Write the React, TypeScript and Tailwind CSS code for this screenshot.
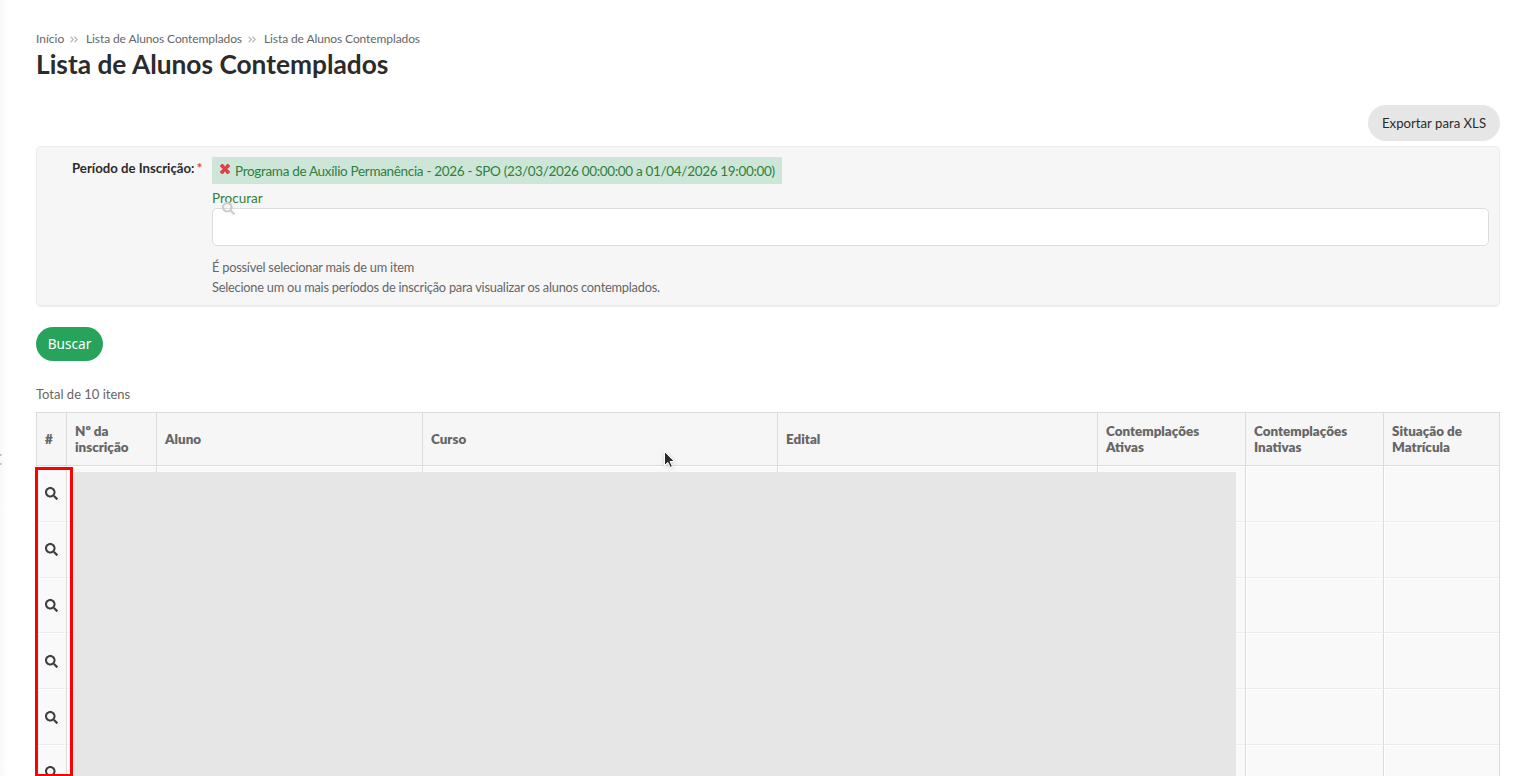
import React, { ReactNode } from "react"
import { FaSearch } from "react-icons/fa"

const COLUMNS = [
  { label: "#", width: "w-[30px]" },
  { label: "Nº da inscrição", width: "w-[90px]" },
  { label: "Aluno", width: "w-[266px]" },
  { label: "Curso", width: "w-[355px]" },
  { label: "Edital", width: "w-[320px]" },
  { label: "Contemplações Ativas", width: "w-[148px]" },
  { label: "Contemplações Inativas", width: "w-[138px]" },
  { label: "Situação de Matrícula", width: "w-[116px]" },
]

const ROWS = [1, 2, 3, 4, 5, 6]

const Separator = () => (
  <svg className="mr-[8px] ml-[6px]" width="8" height="7" viewBox="0 0 8 7">
    <path d="M0.7 0.7L3.3 3.5L0.7 6.3M4.5 0.7L7.1 3.5L4.5 6.3" fill="none" stroke="#bbb" strokeWidth="1.3" />
  </svg>
)

const Breadcrumbs = () => (
  <nav className="flex h-[18px] items-center text-[12px] leading-[18px] whitespace-nowrap text-[#666]">
    <a className="w-7">Início</a>
    <Separator />
    <a className="w-[156px] tracking-[-0.1px]">Lista de Alunos Contemplados</a>
    <Separator />
    <a className="tracking-[-0.1px]">Lista de Alunos Contemplados</a>
  </nav>
)

const RemoveIcon = () => (
  <svg className="mr-[4px] mb-[3px]" width="10" height="10" viewBox="0 0 10 10">
    <path
      d="M0 1.8L1.8 0H3L5 2.6L7 0H8.2L10 1.8V2.6L7.3 5L10 7.4V8.2L8.2 10H7L5 7.4L3 10H1.8L0 8.2V7.4L2.7 5L0 2.6Z"
      fill="#dc4245"
    />
  </svg>
)

const FilterBox = () => (
  <section className="mt-[5px] flex h-[161px] rounded-[5px] border border-b-2 border-[#ececec] bg-[#f6f6f6] pt-[10px] pr-[10px]">
    <label className="w-[175px] shrink-0 pt-px pl-[35px] text-[13.2px] leading-5 font-bold whitespace-nowrap text-[#2b2b2b]">
      Período de Inscrição: <span className="-ml-px text-[#e2453c]">*</span>
    </label>
    <div className="flex-1 text-[13.5px]">
      <div className="flex h-[27px] w-[570px] items-center bg-[#cde6d8] pl-2 whitespace-nowrap text-[#2f803e]">
        <RemoveIcon />
        <span className="pt-[2px] pl-px tracking-[-0.32px]">
          Programa de Auxílio Permanência - 2026 - SPO (23/03/2026 00:00:00 a 01/04/2026 19:00:00)
        </span>
      </div>
      <div className="relative h-6 pt-1 leading-5 text-[#2f803e]">
        Procurar
        <FaSearch className="absolute top-[18px] left-[10px] z-10 size-[13px] text-[#ccc]" />
      </div>
      <div className="h-[38px] rounded-[5px] border border-[#dcdcdc] bg-white" />
      <p className="mt-[11px] text-[12.8px] leading-5 tracking-[-0.22px] text-[#666]">
        É possível selecionar mais de um item
        <br />
        Selecione um ou mais períodos de inscrição para visualizar os alunos contemplados.
      </p>
    </div>
  </section>
)

const TableRow = ({ children }: { children: ReactNode }) => (
  <div className="flex h-[55.8px] border-r border-[#dcdcdc]">
    {COLUMNS.map((column, i) => (
      <div
        key={column.label}
        className={`${column.width} shrink-0 border-b border-l border-b-[#ececec] border-l-[#dcdcdc]`}
      >
        <div className="h-full border-t border-l border-white bg-[#f9f9f9]">{i === 0 && children}</div>
      </div>
    ))}
  </div>
)

const ResultTable = () => (
  <div className="relative mt-2 w-[1464px]">
    <div className="flex h-[54px] border-y border-r border-[#dcdcdc] bg-[#f6f6f6]">
      {COLUMNS.map((column) => (
        <div
          key={column.label}
          className={`${column.width} flex shrink-0 items-center border-l border-[#dcdcdc] pr-4 pl-2 text-[13.4px] leading-4 font-extrabold text-[#666]`}
        >
          {column.label}
        </div>
      ))}
    </div>
    {ROWS.map((row) => (
      <TableRow key={row}>
        <FaSearch className="mt-[20.4px] ml-[7px] size-[13px] text-[#3c3f42]" />
      </TableRow>
    ))}
    {/* redacted student data */}
    <div className="absolute top-[60px] left-[38px] h-[320px] w-[1162px] bg-[#e6e6e6]" />
    {/* highlight around the view buttons */}
    <div className="absolute top-[55px] -left-px h-[310px] w-[38px] border-3 border-[#f00]" />
    <svg className="absolute top-[38px] left-[627px] drop-shadow-sm" width="14" height="20" viewBox="0 0 14 20">
      <path
        d="M1.5 1.5v14l3.3-3.1 2.5 5 2.2-1.1-2.5-4.8h4.4z"
        fill="#2b2b2b"
        stroke="#fff"
        strokeWidth="1"
      />
    </svg>
  </div>
)

const App = () => {
  return (
    <div className="relative h-[776px] w-[1518px] overflow-hidden bg-white font-['Lato',sans-serif]">
      {/* edge of the collapsed side menu */}
      <div className="absolute top-0 left-0 h-full w-2 bg-linear-to-r from-[#f8f8f8] to-white" />
      <svg className="absolute top-[453px] left-0" width="2" height="13" viewBox="0 0 2 13">
        <path d="M0 1h1.5v2H0zM0 10h1.5v2H0z" fill="#bbb" />
      </svg>

      <main className="flex flex-col pt-[30px] pr-[18px] pl-9">
        <Breadcrumbs />
        <h1 className="-mt-px h-[35px] text-[26.3px] leading-[34px] font-bold text-[#2b2b2b]">
          Lista de Alunos Contemplados
        </h1>
        <button className="mt-[23px] h-9 w-[132px] self-end rounded-full bg-[#e6e6e6] pt-0.5 text-[13.2px] text-[#2b2b2b]">
          Exportar para XLS
        </button>
        <FilterBox />
        <button className="mt-5 h-[34px] w-[67px] self-start rounded-full bg-[#28a35b] font-['Noto_Sans','Open_Sans',sans-serif] text-[13.6px] text-white">
          Buscar
        </button>
        <p className="mt-[23px] h-5 text-[13px] leading-5 text-[#666]">Total de 10 itens</p>
        <ResultTable />
      </main>
    </div>
  )
}

export default App
